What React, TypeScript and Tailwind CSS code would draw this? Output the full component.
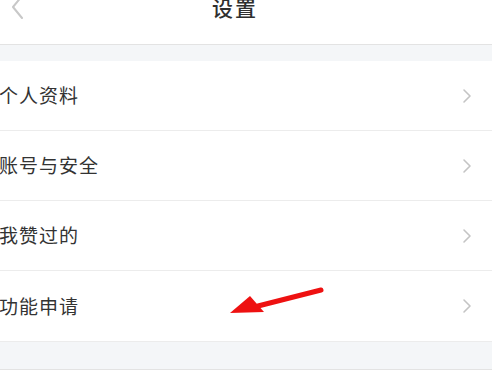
import React from "react";

const Chevron = () => (
  <svg width="10" height="16" viewBox="0 0 10 16" className="shrink-0">
    <path d="M2 2 L8 8 L2 14" fill="none" stroke="#c4c4c4" strokeWidth="1.6" strokeLinecap="round" strokeLinejoin="round" />
  </svg>
);

const rows = ["个人资料", "账号与安全", "我赞过的", "功能申请"];

export default function App() {
  return (
    <div
      className="w-[492px] h-[390px] bg-white overflow-hidden relative"
      style={{ fontFamily: '"Noto Sans CJK SC", "Noto Sans", sans-serif' }}
    >
      <div className="h-[45px] relative border-b border-[#e3e3e3] flex items-start justify-center">
        <div className="absolute left-[8px] top-[-6px]">
          <svg width="18" height="28" viewBox="0 0 18 28">
            <path d="M14 2 L5 13 L14 24" fill="none" stroke="#c8c8c8" strokeWidth="2" strokeLinecap="round" strokeLinejoin="round" />
          </svg>
        </div>
        <div className="text-[21px] leading-none text-[#2f2f2f] font-medium mt-[-3px] mr-[22px] tracking-[2px]">设置</div>
      </div>
      <div className="h-[16px] bg-[#f4f6f8]" />
      <div className="flex flex-col">
        {rows.map((r, i) => (
          <div
            key={r}
            className={`h-[70px] flex items-center justify-between pr-[20px] ${i < rows.length - 1 ? "border-b border-[#ececec]" : ""}`}
          >
            <span className="text-[19px] text-[#333] ml-[-1px] tracking-[1px]">{r}</span>
            <Chevron />
          </div>
        ))}
      </div>
      <div className="h-[29px] bg-[#f4f6f8] border-b border-[#e3e3e3] border-t border-t-[#ececec]" />
      <svg className="absolute left-[228px] top-[284px]" width="100" height="34" viewBox="0 0 100 34">
        <path d="M93 6 L30 22" stroke="#ee1111" strokeWidth="5" strokeLinecap="round" fill="none" />
        <path d="M2 29 L22 12 L36 28 Z" fill="#ee1111" />
      </svg>
    </div>
  );
}
